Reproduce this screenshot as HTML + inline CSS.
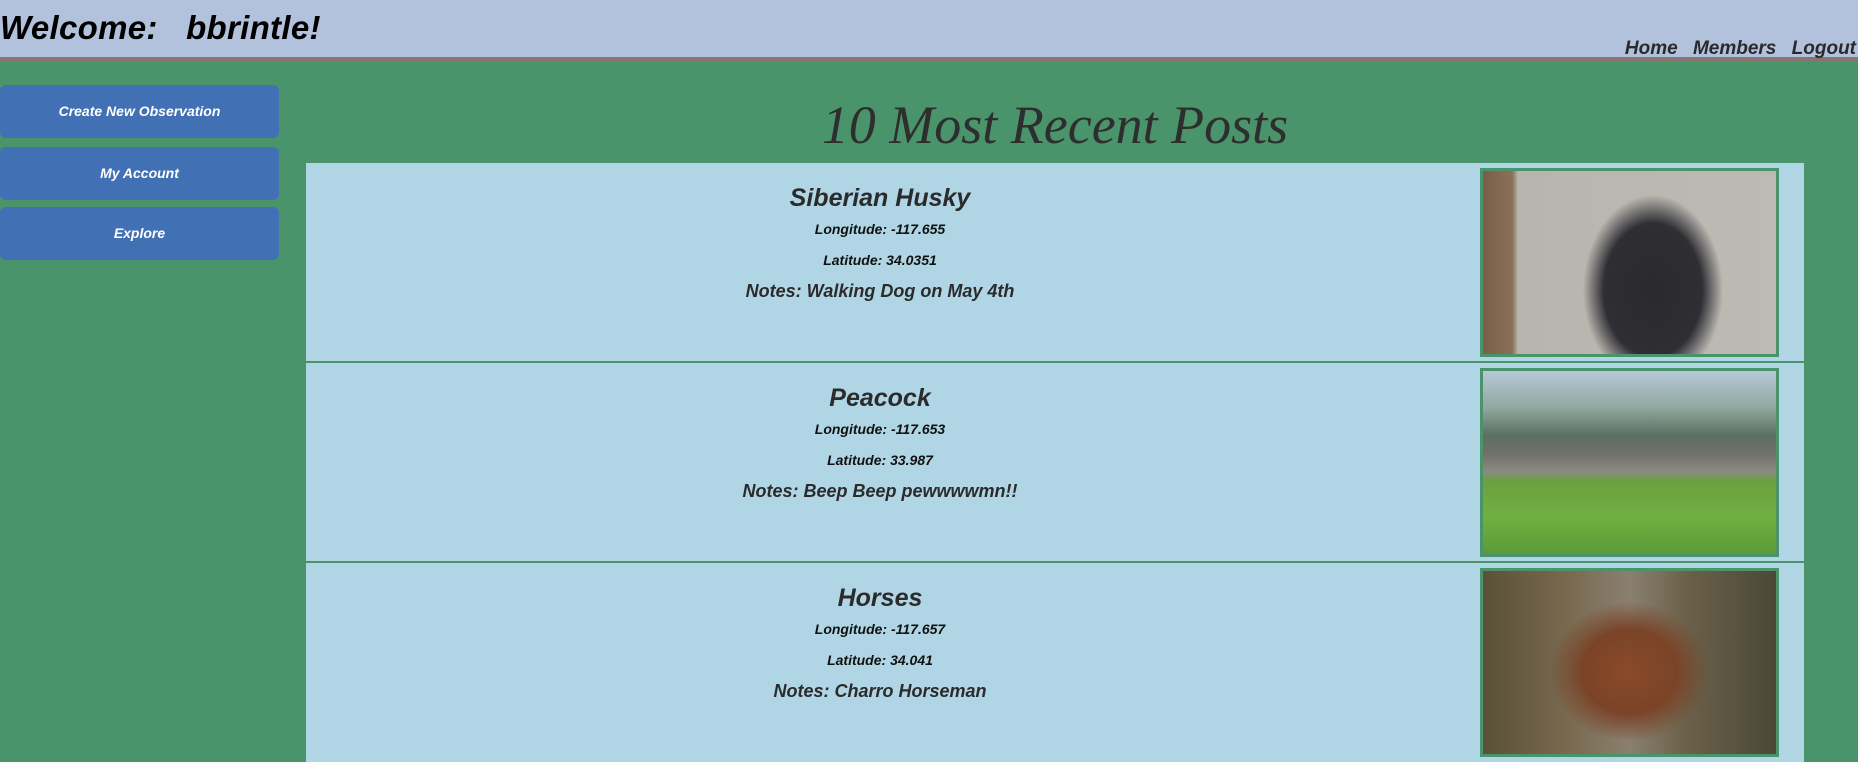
<!DOCTYPE html>
<html><head><meta charset="utf-8"><style>
*{margin:0;padding:0;box-sizing:border-box}
body{width:1858px;height:762px;overflow:hidden;background:#4a946b;font-family:"Liberation Sans",sans-serif;position:relative}
.hdr{position:absolute;left:0;top:0;width:1858px;background:#b2c2dc;border-bottom:4px solid #8a7470;height:61px}
.wel{position:absolute;left:0;top:9px;font-size:33px;font-weight:bold;font-style:italic;color:#000;white-space:pre;letter-spacing:0.3px}
.nav{position:absolute;right:2px;top:38px;font-size:19px;font-weight:bold;font-style:italic;color:#2a2a2a;word-spacing:10px}
.btn{position:absolute;left:0;width:279px;height:53px;background:#4270b4;border-radius:6px;color:#fff;font-weight:bold;font-style:italic;font-size:14px;text-align:center;line-height:53px}
h1{position:absolute;left:306px;width:1498px;top:94px;text-align:center;font-family:"Liberation Serif",serif;font-style:italic;font-weight:normal;font-size:54px;color:#2e2e2e}
.card{position:absolute;left:306px;width:1498px;background:#b0d6e6;height:198px}
.txt{position:absolute;left:0;width:1148px;text-align:center;font-style:italic;font-weight:bold;color:#2b2b2b}
.t1{top:21px;font-size:25px}
.t2{top:58px;font-size:14px;color:#111}
.t3{top:89px;font-size:14px;color:#111}
.t4{top:118px;font-size:18px}
.img{position:absolute;left:1174px;top:5px;width:299px;height:189px;border:3px solid #4a946b}
</style></head><body>
<div class="hdr"><div class="wel">Welcome:   bbrintle!</div><div class="nav">Home Members Logout</div></div>
<div class="btn" style="top:85px">Create New Observation</div>
<div class="btn" style="top:147px">My Account</div>
<div class="btn" style="top:207px">Explore</div>
<h1>10 Most Recent Posts</h1>

<div class="card" style="top:163px">
<div class="txt t1">Siberian Husky</div><div class="txt t2">Longitude: -117.655</div><div class="txt t3">Latitude: 34.0351</div><div class="txt t4">Notes: Walking Dog on May 4th</div>
<div class="img" style="background:radial-gradient(ellipse 70px 95px at 58% 65%,#2a2a2e 0,#2e2e33 70%,transparent 100%),linear-gradient(90deg,#7a5f48 0,#8a7058 10%,#b8b4ae 12%,#bdb9b3 100%)"></div>
</div>

<div class="card" style="top:363px">
<div class="txt t1">Peacock</div><div class="txt t2">Longitude: -117.653</div><div class="txt t3">Latitude: 33.987</div><div class="txt t4">Notes: Beep Beep pewwwwmn!!</div>
<div class="img" style="background:linear-gradient(180deg,#b8c8d8 0,#90a8a0 20%,#5a7060 35%,#707068 45%,#8a8a84 55%,#6aa040 60%,#70b040 80%,#5c9a38 100%)"></div>
</div>

<div class="card" style="top:563px;height:199px">
<div class="txt t1">Horses</div><div class="txt t2">Longitude: -117.657</div><div class="txt t3">Latitude: 34.041</div><div class="txt t4">Notes: Charro Horseman</div>
<div class="img" style="background:radial-gradient(ellipse 80px 70px at 50% 55%,#8a4a28 0,#7a4428 60%,transparent 100%),linear-gradient(90deg,#5a5038 0,#7a6a50 30%,#8a8070 50%,#6a6048 70%,#4a4838 100%)"></div>
</div>
</body></html>
